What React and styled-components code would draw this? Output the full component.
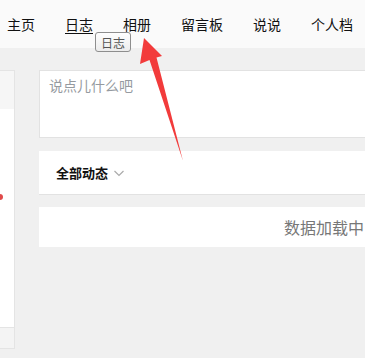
import React from 'react';
import styled, { createGlobalStyle } from 'styled-components';

const GlobalStyle = createGlobalStyle`
  html, body {
    margin: 0;
    padding: 0;
    background: #f0f0f0;
    overflow: hidden;
  }
  body {
    font-family: "Noto Sans CJK SC", "Noto Sans", sans-serif;
  }
`;

const Page = styled.div`
  position: relative;
  width: 365px;
  height: 358px;
  overflow: hidden;
  background: #f0f0f0;
`;

const NavBar = styled.nav`
  height: 48px;
  background: #fafafa;
  display: flex;
  align-items: center;
  padding-left: 7px;
  gap: 30px;
`;

const NavItem = styled.a`
  font-size: 14px;
  color: #111;
  text-decoration: ${({ active }) => (active ? 'underline' : 'none')};
  text-underline-offset: 3px;
  line-height: 20px;
  white-space: nowrap;
`;

const Body = styled.div`
  display: flex;
  gap: 24px;
  padding-top: 22px;
`;

const Sidebar = styled.aside`
  width: 14px;
  height: 277px;
  flex: none;
  background: #fff;
  border: 1px solid #e4e4e4;
  border-left: none;
  display: flex;
  flex-direction: column;
  justify-content: space-between;
`;

const SideHead = styled.div`
  height: 38px;
  background: #f6f6f6;
`;

const SideFoot = styled.div`
  height: 20px;
  background: #f4f4f4;
  border-top: 1px solid #e4e4e4;
`;

const Main = styled.main`
  width: 570px;
  flex: none;
  display: flex;
  flex-direction: column;
`;

const Composer = styled.div`
  height: 68px;
  background: #fff;
  border: 1px solid #e2e2e2;
  box-sizing: border-box;
  padding: 4px 9px;
  font-size: 14px;
  color: #959aa0;
  line-height: 20px;
`;

const FeedHead = styled.div`
  margin-top: 13px;
  height: 44px;
  background: #fff;
  border-bottom: 1px solid #e2e2e2;
  box-sizing: border-box;
  display: flex;
  align-items: center;
  padding-left: 17px;
  gap: 5px;
`;

const FeedTitle = styled.span`
  font-size: 13px;
  font-weight: 700;
  color: #111;
`;

const Loading = styled.div`
  margin-top: 12px;
  height: 40px;
  background: #fff;
  display: flex;
  align-items: center;
  justify-content: center;
  font-size: 16px;
  color: #777;
`;

const Tooltip = styled.div`
  position: absolute;
  left: 95px;
  top: 32px;
  width: 36px;
  height: 20px;
  box-sizing: border-box;
  border: 1px solid #8e8e8e;
  border-radius: 3px;
  background: linear-gradient(#fefefe, #ececec);
  font-size: 12px;
  color: #555;
  display: flex;
  align-items: center;
  justify-content: center;
`;

const Dot = styled.span`
  position: absolute;
  left: -3px;
  top: 194px;
  width: 6px;
  height: 6px;
  border-radius: 50%;
  background: #e04a4a;
`;

const ArrowLayer = styled.svg`
  position: absolute;
  left: 0;
  top: 0;
  pointer-events: none;
`;

const Chevron = () => (
  <svg width="12" height="12" viewBox="0 0 12 12">
    <path d="M1.5 4 L6 8.5 L10.5 4" fill="none" stroke="#aaa" strokeWidth="1.2" />
  </svg>
);

const App = () => {
  const items = ['主页', '日志', '相册', '留言板', '说说', '个人档'];
  return (
    <Page>
      <GlobalStyle />
      <NavBar>
        {items.map((t) => (
          <NavItem key={t} active={t === '日志'}>{t}</NavItem>
        ))}
      </NavBar>
      <Body>
        <Sidebar>
          <SideHead />
          <SideFoot />
        </Sidebar>
        <Main>
          <Composer>说点儿什么吧</Composer>
          <FeedHead>
            <FeedTitle>全部动态</FeedTitle>
            <Chevron />
          </FeedHead>
          <Loading>数据加载中</Loading>
        </Main>
      </Body>
      <Dot />
      <Tooltip>日志</Tooltip>
      <ArrowLayer width="365" height="358">
        <polygon
          points="144,38 162,56 156.5,57.5 183,161 149.5,60 140,64"
          fill="#f23b3b"
        />
      </ArrowLayer>
    </Page>
  );
};

export default App;
